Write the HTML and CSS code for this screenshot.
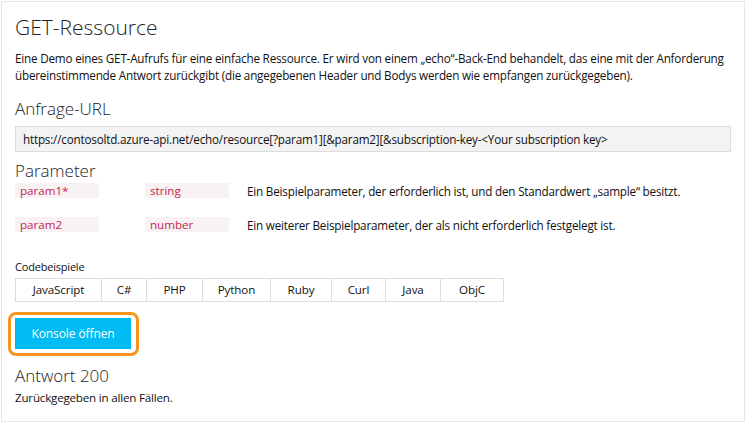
FILE: index.html
```html
<!DOCTYPE html>
<html lang="de">
<head>
<meta charset="utf-8">
<link rel="stylesheet" href="styles.css">
</head>
<body>
<div class="frame">
  <h1 class="title">GET-Ressource</h1>
  <p class="desc">Eine Demo eines GET-Aufrufs für eine einfache Ressource. Er wird von einem „echo“-Back-End behandelt, das eine mit der Anforderung übereinstimmende Antwort zurückgibt (die angegebenen Header und Bodys werden wie empfangen zurückgegeben).</p>

  <h2 class="heading">Anfrage-URL</h2>
  <div class="url">https://contosoltd.azure-api.net/echo/resource[?param1][&amp;param2][&amp;subscription-key-&lt;Your subscription key&gt;</div>

  <h2 class="heading heading-params">Parameter</h2>
  <div class="params">
    <div class="param-row">
      <span class="code code-name">param1*</span>
      <span class="code code-type">string</span>
      <span class="param-desc">Ein Beispielparameter, der erforderlich ist, und den Standardwert „sample“ besitzt.</span>
    </div>
    <div class="param-row">
      <span class="code code-name">param2</span>
      <span class="code code-type">number</span>
      <span class="param-desc">Ein weiterer Beispielparameter, der als nicht erforderlich festgelegt ist.</span>
    </div>
  </div>

  <div class="samples-label">Codebeispiele</div>
  <div class="tabs">
    <span class="tab">JavaScript</span>
    <span class="tab">C#</span>
    <span class="tab">PHP</span>
    <span class="tab">Python</span>
    <span class="tab">Ruby</span>
    <span class="tab">Curl</span>
    <span class="tab">Java</span>
    <span class="tab">ObjC</span>
  </div>

  <div class="btn-ring"><button class="btn">Konsole öffnen</button></div>

  <h2 class="heading heading-resp">Antwort 200</h2>
  <p class="resp">Zurückgegeben in allen Fällen.</p>
</div>
</body>
</html>
```

FILE: styles.css
```css
* { box-sizing: border-box; }
html, body { margin: 0; padding: 0; background: #fff; }
body {
  font-family: "Open Sans", "Noto Sans", sans-serif;
  color: #111;
  font-size: 12px;
}
.frame {
  margin: 1px 2px 2px 1px;
  height: 421px;
  border: 1px solid #e6e6e6;
  padding: 0 13px;
}
.title {
  margin: 10px 0 0 0;
  font-size: 21px;
  font-weight: 300;
  line-height: 30px;
  color: #222;
}
.desc {
  margin: 8px 0 0 0;
  font-size: 11.7px;
  line-height: 17px;
  letter-spacing: -0.2px;
}
.heading {
  margin: 0;
  font-size: 17px;
  font-weight: 300;
  line-height: 24px;
  color: #222;
}
.desc + .heading { margin-top: 13px; }
.url {
  margin-top: 5px;
  background: #f3f3f3;
  border: 1px solid #dcdcdc;
  padding: 0 7px;
  height: 26px;
  line-height: 24px;
  width: 716px;
  font-size: 11.7px;
  letter-spacing: -0.2px;
}
.heading-params { margin-top: 7px; }
.params { display: flex; flex-direction: column; gap: 19px; }
.param-row { display: flex; align-items: center; height: 15px; }
.code {
  display: inline-block;
  width: 84px;
  height: 15px;
  line-height: 15px;
  background: #f9f2f4;
  color: #c7254e;
  padding-left: 5px;
  font-size: 11.6px;
}
.code-name { margin-right: 46px; }
.code-type { margin-right: 18px; }
.param-desc { font-size: 11.7px; letter-spacing: -0.2px; }
.samples-label {
  margin-top: 28px;
  font-size: 11px;
  line-height: 14px;
  letter-spacing: -0.2px;
}
.tabs {
  margin-top: 4px;
  display: inline-flex;
  border: 1px solid #dcdcdc;
  height: 24px;
}
.tab {
  border-left: 1px solid #dcdcdc;
  line-height: 22px;
  font-size: 11.6px;
  text-align: center;
  letter-spacing: -0.1px;
}
.tab:first-child { border-left: 0; }
.tab:nth-child(1) { width: 85px; }
.tab:nth-child(2) { width: 45px; }
.tab:nth-child(3) { width: 56px; }
.tab:nth-child(4) { width: 68px; }
.tab:nth-child(5) { width: 61px; }
.tab:nth-child(6) { width: 54px; }
.tab:nth-child(7) { width: 55px; }
.tab:nth-child(8) { width: 63px; }
.btn-ring {
  margin: 10px 0 0 -7px;
  width: 131px;
  height: 44px;
  border: 3px solid #f7941e;
  border-radius: 8px;
  padding: 3px 4px;
}
.btn {
  display: block;
  width: 116px;
  height: 31px;
  border: 0;
  background: #00bcf2;
  color: #fff;
  font-family: "Open Sans", "Noto Sans", sans-serif;
  font-size: 12px;
  letter-spacing: -0.1px;
  padding: 0;
}
.heading-resp { margin-top: 8px; }
.resp {
  margin: 2px 0 0 0;
  font-size: 11.6px;
  line-height: 16px;
  letter-spacing: -0.2px;
}
```
